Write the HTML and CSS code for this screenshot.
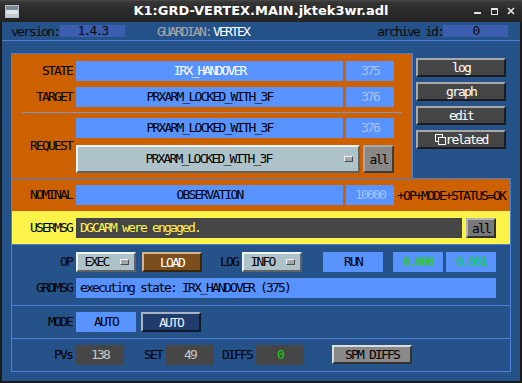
FILE: index.html
```html
<!DOCTYPE html>
<html>
<head>
<meta charset="utf-8">
<link rel="stylesheet" href="styles.css">
</head>
<body>
<div class="window">
  <div class="titlebar">
    <svg class="wicon" width="14" height="13" viewBox="0 0 14 13">
      <rect x="0.5" y="0.5" width="13" height="12" fill="#dfe3e7" stroke="#b9bfc6"/>
      <rect x="1" y="1" width="12" height="4" fill="#7d8896"/>
      <rect x="1" y="9" width="12" height="3" fill="#c4cad1"/>
    </svg>
    <div class="title">K1:GRD-VERTEX.MAIN.jktek3wr.adl</div>
    <svg class="wbtns" width="46" height="22" viewBox="0 0 46 22">
      <rect x="4" y="12" width="7" height="2" fill="#e2e2e2"/>
      <rect x="21.5" y="8.5" width="6" height="6" fill="none" stroke="#e2e2e2"/>
      <rect x="21" y="8" width="7" height="2" fill="#e2e2e2"/>
      <path d="M38 8 L44 14 M44 8 L38 14" stroke="#e2e2e2" stroke-width="1.7"/>
    </svg>
  </div>
  <div class="client">
    <div class="header">
      <span class="hlabel">version:</span><span class="hbox hver">1.4.3</span>
      <span class="guard">GUARDIAN:</span><span class="gname">VERTEX</span>
      <span class="spacer"></span>
      <span class="hlabel">archive id:</span><span class="hbox">0</span>
    </div>
    <div class="main">
      <div class="top">
        <div class="panel">
          <div class="row">
            <div class="lbl">STATE</div>
            <div class="val wide white">IRX_HANDOVER</div>
            <div class="val num">375</div>
          </div>
          <div class="row gap6">
            <div class="lbl">TARGET</div>
            <div class="val wide">PRXARM_LOCKED_WITH_3F</div>
            <div class="val num">376</div>
          </div>
          <div class="sep"></div>
          <div class="req">
            <div class="lbl">REQUEST</div>
            <div class="reqcol">
              <div class="row">
                <div class="val wide">PRXARM_LOCKED_WITH_3F</div>
                <div class="val num">376</div>
              </div>
              <div class="row tall">
                <div class="menu wmenu"><span class="mtxt">PRXARM_LOCKED_WITH_3F</span><span class="ind"></span></div>
                <div class="allbtn">all</div>
              </div>
            </div>
          </div>
        </div>
        <div class="side">
          <div class="sbtn">log</div>
          <div class="sbtn">graph</div>
          <div class="sbtn">edit</div>
          <div class="sbtn"><svg class="relicon" width="11" height="11" viewBox="0 0 11 11"><rect x="0.5" y="0.5" width="7" height="7" fill="none" stroke="#fff"/><rect x="3.5" y="3.5" width="7" height="7" fill="#464646" stroke="#fff"/></svg>related</div>
        </div>
      </div>
      <div class="lower">
        <div class="nominal">
          <div class="row">
            <div class="lbl">NOMINAL</div>
            <div class="val wide">OBSERVATION</div>
            <div class="val num">10000</div>
            <div class="status">+OP+MODE+STATUS=OK</div>
          </div>
        </div>
        <div class="usermsg">
          <div class="row">
            <div class="lbl">USERMSG</div>
            <div class="msg">DGCARM were engaged.</div>
            <div class="allbtn2">all</div>
          </div>
        </div>
        <div class="ops">
          <div class="row">
            <div class="lbl">OP</div>
            <div class="menu w60"><span class="mtxt">EXEC</span><span class="ind"></span></div>
            <div class="loadbtn">LOAD</div>
            <div class="lbl loglbl">LOG</div>
            <div class="menu w60"><span class="mtxt">INFO</span><span class="ind"></span></div>
            <div class="val run">RUN</div>
            <div class="val green g1">0.000</div>
            <div class="val green g2">0.001</div>
          </div>
          <div class="row gap6">
            <div class="lbl">GRDMSG</div>
            <div class="val grdmsg">executing state: IRX_HANDOVER (375)</div>
          </div>
        </div>
        <div class="mode">
          <div class="row">
            <div class="lbl">MODE</div>
            <div class="val w60">AUTO</div>
            <div class="autobtn">AUTO</div>
          </div>
        </div>
        <div class="pvs">
          <div class="row">
            <div class="lbl">PVs</div>
            <div class="dbox">138</div>
            <div class="lbl plbl">SET</div>
            <div class="dbox">49</div>
            <div class="lbl plbl">DIFFS</div>
            <div class="dbox greentxt">0</div>
            <div class="spmbtn">SPM DIFFS</div>
          </div>
        </div>
      </div>
    </div>
  </div>
</div>
</body>
</html>
```

FILE: styles.css
```css
* { box-sizing: border-box; }
html, body { margin: 0; padding: 0; }
body {
  width: 522px;
  height: 383px;
  overflow: hidden;
  background: #1b1b1b;
  font-family: "DejaVu Sans Mono", monospace;
  font-size: 13px;
  letter-spacing: -1.83px;
  color: #000;
}
.window { width: 522px; height: 383px; background: #1b1b1b; }

.titlebar {
  height: 22px;
  display: grid;
  grid-template-columns: 1fr auto 1fr;
  align-items: center;
  background: linear-gradient(#4a4a4a 0, #363636 2px, #2c2c2c 40%, #232323 100%);
}
.wicon { display: block; margin-left: 5px; }
.wbtns { display: block; justify-self: end; margin-right: 6px; }
.title {
  font-family: "DejaVu Sans", sans-serif;
  font-weight: bold;
  font-size: 13px;
  letter-spacing: 0;
  color: #fff;
  line-height: 22px;
  white-space: nowrap;
}

.client { margin: 0 2px; height: 359px; background: #26528a; }

.header {
  height: 19px;
  border-bottom: 1px solid #4c7fd6;
  display: flex;
  align-items: center;
  padding: 0 12px 0 9px;
  white-space: nowrap;
}
.hlabel { color: #0c0c0c; }
.hbox {
  width: 65px;
  height: 12px;
  line-height: 12px;
  background: #3b5eae;
  color: #0c0c0c;
  text-align: center;
}
.hver { margin-left: 1px; }
.guard { margin-left: 32px; color: #a9a9a9; }
.gname { margin-left: 2px; color: #fff; }
.spacer { flex: 1; }

.main { padding: 12px 9px 0 9px; }
.top { display: flex; height: 125px; }
.panel {
  width: 402px;
  background: #cd6100;
  border: 1px solid #4c7fd6;
  border-bottom: 0;
  padding-top: 7px;
}
.side {
  width: 90px;
  margin-left: 3px;
  padding-top: 5px;
  display: flex;
  flex-direction: column;
  gap: 5px;
}
.sbtn {
  height: 19px;
  background: #464646;
  border: 2px solid;
  border-color: #a9a9a9 #1c1c1c #1c1c1c #a9a9a9;
  color: #fff;
  display: flex;
  align-items: center;
  justify-content: center;
  line-height: 15px;
}
.relicon { display: block; }

.row { display: flex; align-items: center; height: 20px; white-space: nowrap; }
.row.tall { height: 28px; }
.gap6 { margin-top: 6px; }
.lbl { width: 60px; margin-right: 4px; text-align: right; line-height: 20px; }
.val {
  height: 20px;
  line-height: 20px;
  background: #5893ff;
  text-align: center;
}
.wide { width: 267px; }
.white { color: #fff; }
.num { width: 48px; margin-left: 3px; color: #a9c2f7; }
.sep { margin: 5px 0 5px 10px; width: 380px; height: 1px; background: #7896c8; }
.req { display: flex; align-items: center; }
.reqcol { display: flex; flex-direction: column; gap: 7px; }

.menu {
  height: 20px;
  display: flex;
  align-items: center;
  background: #aec2c9;
  border: 2px solid;
  border-color: #eef2f3 #5e6466 #5e6466 #eef2f3;
  line-height: 16px;
}
.row.tall .menu { height: 28px; }
.wmenu { width: 284px; }
.w60 { width: 60px; }
.mtxt { flex: 1; text-align: center; }
.ind {
  width: 9px;
  height: 6px;
  margin: 0 5px;
  background: #a2a6a8;
  border: 1px solid;
  border-color: #f2f2f2 #4e4e4e #4e4e4e #f2f2f2;
}
.allbtn {
  width: 31px;
  height: 28px;
  margin-left: 3px;
  background: #888;
  border: 2px solid;
  border-color: #a8a8a8 #3c3c3c #3c3c3c #a8a8a8;
  display: flex;
  align-items: center;
  justify-content: center;
}

.lower {
  width: 500px;
  height: 194px;
  border: 1px solid #4c7fd6;
}
.nominal { height: 32px; background: #cd6100; padding-top: 6px; }
.status { margin-left: 3px; }
.usermsg { height: 33px; background: #fbf34a; padding-top: 7px; }
.msg {
  width: 386px;
  height: 20px;
  line-height: 20px;
  background: #464646;
  color: #fbf34a;
  padding-left: 4px;
}
.allbtn2 {
  width: 30px;
  height: 20px;
  margin-left: 4px;
  background: #787878;
  border: 2px solid;
  border-color: #b4b4b4 #303030 #303030 #b4b4b4;
  display: flex;
  align-items: center;
  justify-content: center;
}
.ops { height: 61px; border-top: 1px solid #4c7fd6; padding-top: 7px; }
.loadbtn {
  width: 60px;
  height: 20px;
  margin-left: 6px;
  background: #7b4e1c;
  border: 2px solid;
  border-color: #d2b48e #3a2608 #3a2608 #d2b48e;
  color: #fff;
  display: flex;
  align-items: center;
  justify-content: center;
}
.loglbl { width: 36px; }
.run { width: 60px; margin-left: 21px; }
.green { width: 50px; color: #14d414; }
.g1 { margin-left: 10px; }
.g2 { margin-left: 3px; }
.grdmsg { width: 420px; text-align: left; padding-left: 4px; }

.mode { height: 33px; border-top: 1px solid #4c7fd6; padding-top: 6px; }
.autobtn {
  width: 60px;
  height: 20px;
  margin-left: 5px;
  background: #1f3c6b;
  border: 2px solid;
  border-color: #a9b2c2 #0f1a30 #0f1a30 #a9b2c2;
  color: #e6ecff;
  display: flex;
  align-items: center;
  justify-content: center;
}
.pvs { height: 33px; border-top: 1px solid #4c7fd6; padding-top: 6px; }
.dbox {
  width: 48px;
  height: 20px;
  line-height: 20px;
  background: #464646;
  color: #c8c8c8;
  text-align: center;
}
.greentxt { color: #14d414; }
.plbl { width: 38px; }
.spmbtn {
  width: 80px;
  height: 19px;
  margin-left: 28px;
  align-self: flex-start;
  background: #8a8a8a;
  border: 2px solid;
  border-color: #dcdcdc #333 #333 #dcdcdc;
  display: flex;
  align-items: center;
  justify-content: center;
}
```
